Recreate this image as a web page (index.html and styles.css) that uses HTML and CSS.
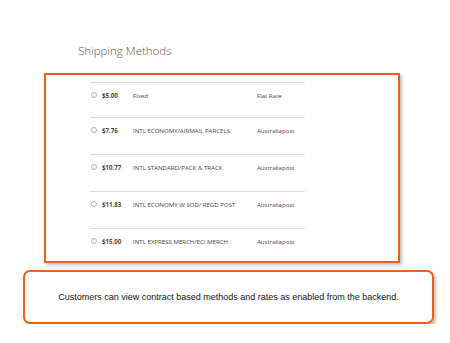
FILE: index.html
```html
<!DOCTYPE html>
<html lang="en">
<head>
    <meta charset="UTF-8">
    <title>Shipping Methods</title>
    <link rel="stylesheet" href="styles.css">
</head>
<body>

    <h2 class="page-title">Shipping Methods</h2>

    <div class="methods-frame">
        <table class="methods-table">
            <tbody>
                <tr>
                    <td class="col-radio"><span class="radio"></span></td>
                    <td class="col-price">$5.00</td>
                    <td class="col-method">Fixed</td>
                    <td class="col-carrier">Flat Rate</td>
                </tr>
                <tr>
                    <td class="col-radio"><span class="radio"></span></td>
                    <td class="col-price">$7.76</td>
                    <td class="col-method">INTL ECONOMY/AIRMAIL PARCELS</td>
                    <td class="col-carrier">Australiapost</td>
                </tr>
                <tr>
                    <td class="col-radio"><span class="radio"></span></td>
                    <td class="col-price">$10.77</td>
                    <td class="col-method">INTL STANDARD/PACK &amp; TRACK</td>
                    <td class="col-carrier">Australiapost</td>
                </tr>
                <tr>
                    <td class="col-radio"><span class="radio"></span></td>
                    <td class="col-price">$11.83</td>
                    <td class="col-method">INTL ECONOMY W SOD/ REGD POST</td>
                    <td class="col-carrier">Australiapost</td>
                </tr>
                <tr>
                    <td class="col-radio"><span class="radio"></span></td>
                    <td class="col-price">$15.00</td>
                    <td class="col-method">INTL EXPRESS MERCH/ECI MERCH</td>
                    <td class="col-carrier">Australiapost</td>
                </tr>
            </tbody>
        </table>
    </div>

    <div class="callout">
        Customers can view contract based methods and rates as enabled from the backend.
    </div>

</body>
</html>
```

FILE: styles.css
```css
body {
    margin: 0;
    background: #fff;
    font-family: "Open Sans", sans-serif;
    color: #333;
}

/* Section heading */
.page-title {
    margin: 0;
    padding: 42px 0 0 78px;
    font-size: 11.5px;
    font-weight: 300;
    color: #555;
    line-height: 18px;
}

/* Orange highlight round the table */
.methods-frame {
    margin: 13px 0 0 44px;
    width: 352px;
    height: 186px;
    border: 2px solid #e8601c;
    box-shadow: 2px 2px 3px rgba(0, 0, 0, 0.25);
}

.methods-table {
    margin: 7px 0 0 44px;
    width: 215px;
    border-collapse: collapse;
    font-size: 6.1px;
    color: #444;
}

.methods-table td {
    border-top: 1px solid #ddd;
    height: 37px;
    padding: 8px 0 0;
    vertical-align: top;
    box-sizing: border-box;
    white-space: nowrap;
}

.methods-table tr:first-child td {
    height: 35px;
}

.col-radio {
    width: 12px;
}

.radio {
    display: inline-block;
    width: 6px;
    height: 6px;
    box-sizing: border-box;
    border: 1px solid #b0b0b0;
    border-radius: 50%;
    margin-left: 1px;
}

.col-price {
    width: 31px;
    font-weight: 700;
}

.col-method {
    width: 124px;
}

/* Note below the table */
.callout {
    margin: 7px 0 0 23px;
    width: 407px;
    height: 50px;
    border: 2px solid #e8601c;
    border-radius: 7px;
    box-shadow: 2px 2px 3px rgba(0, 0, 0, 0.25);
    display: flex;
    align-items: center;
    justify-content: center;
    font-family: "Liberation Sans", Arial, sans-serif;
    font-size: 9px;
    color: #111;
}
```
